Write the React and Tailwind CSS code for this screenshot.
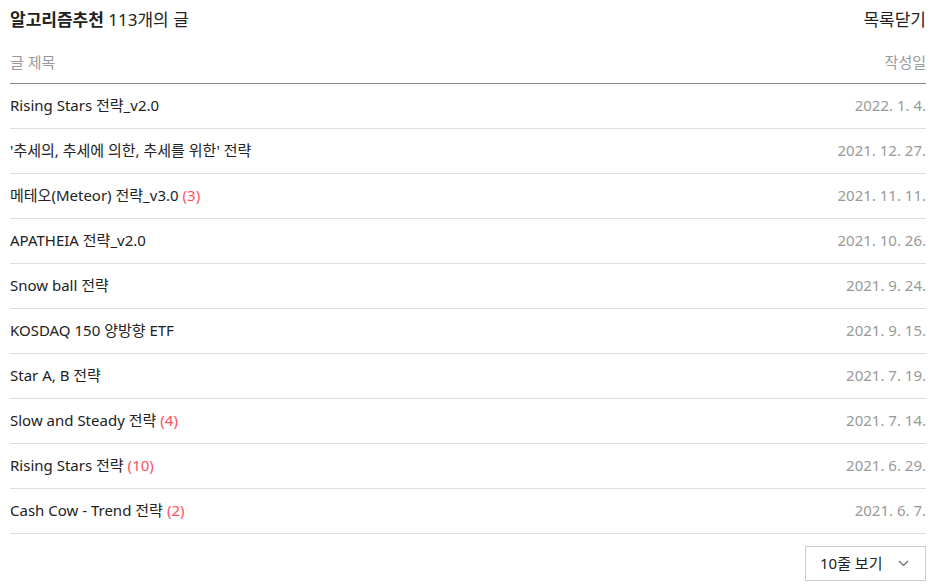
import React from "react";

const rows = [
  { t: "Rising Stars 전략_v2.0", d: "2022. 1. 4." },
  { t: "'추세의, 추세에 의한, 추세를 위한' 전략", d: "2021. 12. 27." },
  { t: "메테오(Meteor) 전략_v3.0", c: 3, d: "2021. 11. 11." },
  { t: "APATHEIA 전략_v2.0", d: "2021. 10. 26." },
  { t: "Snow ball 전략", d: "2021. 9. 24." },
  { t: "KOSDAQ 150 양방향 ETF", d: "2021. 9. 15." },
  { t: "Star A, B 전략", d: "2021. 7. 19." },
  { t: "Slow and Steady 전략", c: 4, d: "2021. 7. 14." },
  { t: "Rising Stars 전략", c: 10, d: "2021. 6. 29." },
  { t: "Cash Cow - Trend 전략", c: 2, d: "2021. 6. 7." },
];

export default function App() {
  return (
    <div
      className="w-[934px] h-[588px] bg-white pl-[10px] pr-[8px] text-[15px] text-[#222]"
      style={{ fontFamily: '"Noto Sans", "Noto Sans CJK KR", sans-serif' }}
    >
      <div className="flex items-center justify-between h-[40px]">
        <div className="text-[17px]">
          <span className="font-bold">알고리즘추천</span> 113개의 글
        </div>
        <div className="text-[17px]">목록닫기</div>
      </div>
      <div className="flex items-center justify-between h-[44px] pt-[2px] border-b border-[#888] text-[#999]">
        <span>글 제목</span>
        <span>작성일</span>
      </div>
      {rows.map((r, i) => (
        <div
          key={i}
          className="flex items-center justify-between h-[45px] pb-[2px] border-b border-[#ddd]"
        >
          <div>
            {r.t}
            {r.c ? <span className="text-[#ff5060] ml-[4px]">({r.c})</span> : null}
          </div>
          <div className="text-[#999]">{r.d}</div>
        </div>
      ))}
      <div className="flex justify-end pt-[12px]">
        <button className="flex items-center justify-between w-[121px] h-[35px] border border-[#ccc] pl-[14px] pr-[16px] text-[15px] text-[#222]">
          <span>10줄 보기</span>
          <svg width="11" height="7" viewBox="0 0 11 7" fill="none">
            <path d="M1 1l4.5 4.5L10 1" stroke="#666" strokeWidth="1.2" />
          </svg>
        </button>
      </div>
    </div>
  );
}
